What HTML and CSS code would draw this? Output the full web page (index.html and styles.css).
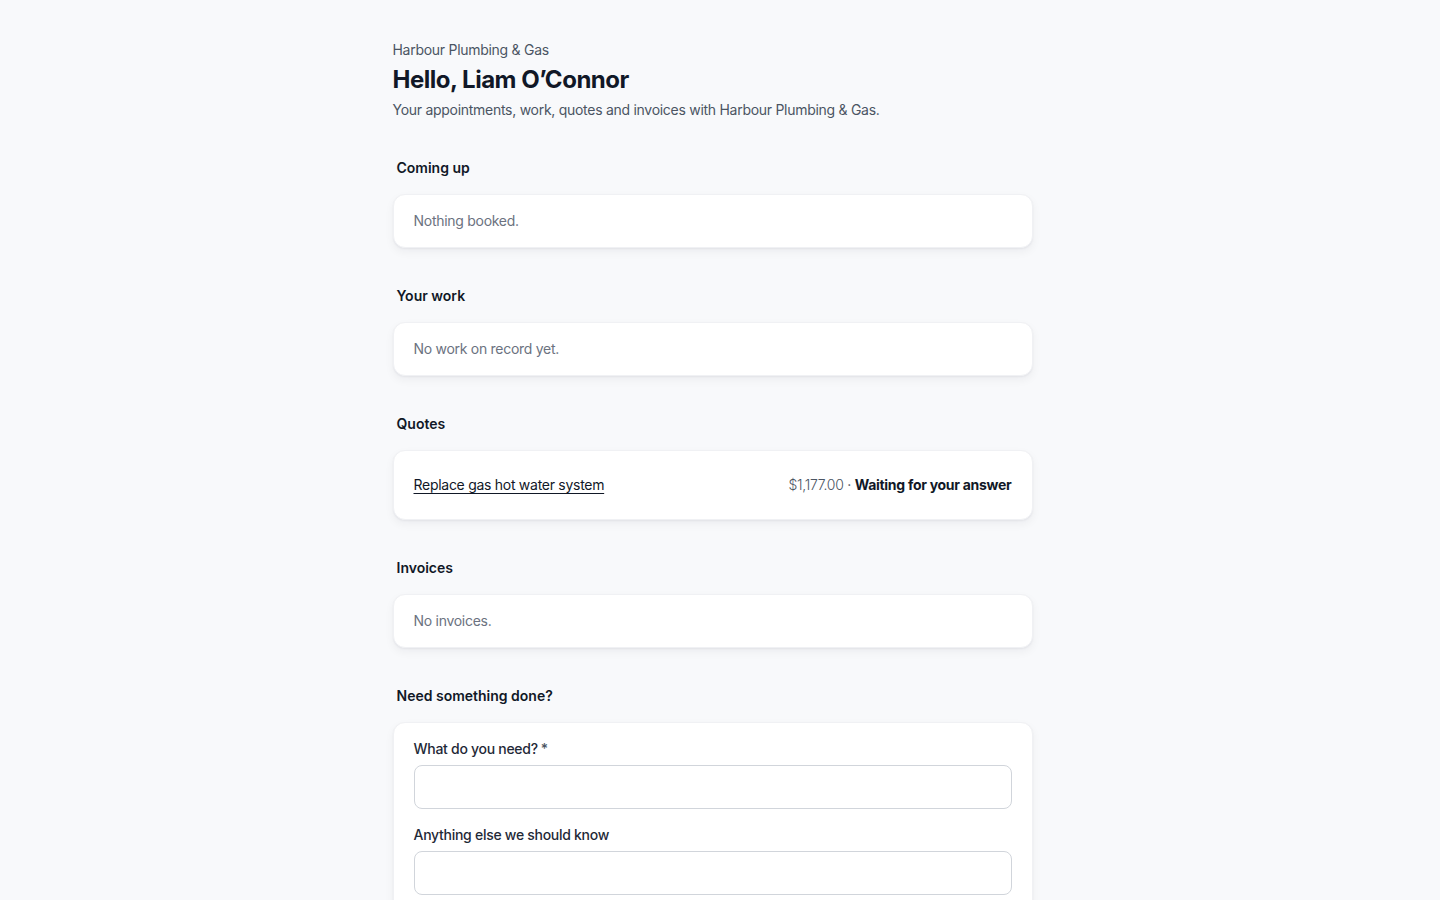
FILE: index.html
```html
<!DOCTYPE html>
<html lang="en">
<head>
<meta charset="utf-8">
<title>Harbour Plumbing &amp; Gas — Customer portal</title>
<link rel="stylesheet" href="styles.css">
</head>
<body>
<main class="page">
  <header class="intro">
    <p class="business">Harbour Plumbing &amp; Gas</p>
    <h1 class="greeting">Hello, Liam O’Connor</h1>
    <p class="lede">Your appointments, work, quotes and invoices with Harbour Plumbing &amp; Gas.</p>
  </header>

  <section class="section">
    <h2 class="section-title">Coming up</h2>
    <div class="card"><p class="empty">Nothing booked.</p></div>
  </section>

  <section class="section">
    <h2 class="section-title">Your work</h2>
    <div class="card"><p class="empty">No work on record yet.</p></div>
  </section>

  <section class="section">
    <h2 class="section-title">Quotes</h2>
    <div class="card">
      <div class="row">
        <a class="row-link" href="#">Replace gas hot water system</a>
        <span class="row-meta"><span class="amount">$1,177.00</span> · <strong class="status">Waiting for your answer</strong></span>
      </div>
    </div>
  </section>

  <section class="section">
    <h2 class="section-title">Invoices</h2>
    <div class="card"><p class="empty">No invoices.</p></div>
  </section>

  <section class="section">
    <h2 class="section-title">Need something done?</h2>
    <form class="card form">
      <label class="field">
        <span class="label">What do you need?<span class="req">*</span></span>
        <input class="input" type="text">
      </label>
      <label class="field">
        <span class="label">Anything else we should know</span>
        <input class="input" type="text">
      </label>
      <label class="field">
        <span class="label">When suits you</span>
        <input class="input" type="text">
      </label>
      <div class="actions"><button class="button" type="button">Send request</button></div>
    </form>
  </section>
</main>
</body>
</html>
```

FILE: styles.css
```css
* { box-sizing: border-box; }
html, body { margin: 0; padding: 0; }
body {
  background: #f8f9fb;
  color: #111827;
  font-family: Inter, "Noto Sans", "Liberation Sans", sans-serif;
  font-size: 14px;
  line-height: 20px;
  letter-spacing: -0.02em;
  padding-right: 15px;
}
.page {
  max-width: 640px;
  margin: 0 auto;
  padding: 40px 0 64px;
}
.intro p, .intro h1 { margin: 0; }
.business { color: #4b5563; font-size: 14px; line-height: 20px; }
.greeting {
  font-size: 24px;
  line-height: 32px;
  font-weight: 700;
  letter-spacing: -0.02em;
  margin-top: 4px !important;
  color: #111827;
}
.lede { color: #4b5563; margin-top: 4px !important; }
.section { margin-top: 38px; }
.section-title {
  margin: 0 0 16px;
  padding: 0 4px;
  font-size: 14px;
  line-height: 20px;
  font-weight: 600;
  letter-spacing: 0;
  color: #111827;
}
.card {
  background: #ffffff;
  border: 1px solid #f0f1f4;
  border-radius: 12px;
  box-shadow: 0 1px 2px rgba(16, 24, 40, 0.05), 0 4px 10px rgba(16, 24, 40, 0.05);
  padding: 16px 20px;
}
.empty { margin: 0; color: #6b7280; }
.row {
  display: flex;
  justify-content: space-between;
  align-items: center;
  padding: 8px 0;
}
.row-link { color: #111827; text-decoration: underline; text-underline-offset: 3px; }
.row-meta { color: #4b5563; }
.amount { font-weight: 300; color: #4b5563; }
.status { font-weight: 700; color: #111827; }
.form { display: flex; flex-direction: column; gap: 16px; padding-top: 16px; padding-bottom: 20px; }
.field { display: flex; flex-direction: column; gap: 6px; }
.label { font-size: 14px; font-weight: 500; color: #1f2937; }
.req { color: #4b5563; margin-left: 3px; }
.input {
  height: 44px;
  border: 1px solid #d1d5db;
  border-radius: 8px;
  background: #fff;
  font: inherit;
  padding: 0 12px;
}
.actions { display: flex; }
.button {
  font: inherit;
  font-weight: 600;
  background: #111827;
  color: #fff;
  border: 0;
  border-radius: 8px;
  padding: 10px 18px;
}
```
